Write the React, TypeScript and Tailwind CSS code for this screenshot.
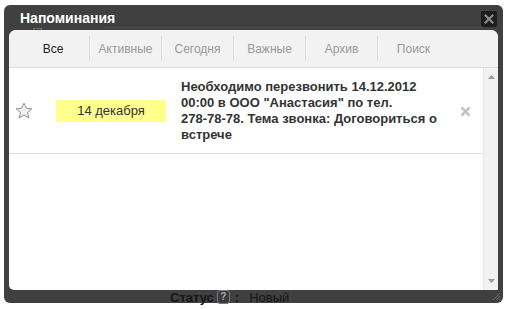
import React from "react";

const tabs = ["Все", "Активные", "Сегодня", "Важные", "Архив", "Поиск"];

function Star() {
  return (
    <svg width="18" height="18" viewBox="0 0 18 18">
      <defs>
        <linearGradient id="sg" x1="0" y1="0" x2="0" y2="1">
          <stop offset="0" stopColor="#ffffff" />
          <stop offset="1" stopColor="#e6e6e6" />
        </linearGradient>
      </defs>
      <polygon
        points="9,1.2 11.3,6.3 16.8,6.8 12.6,10.5 13.9,16 9,13.1 4.1,16 5.4,10.5 1.2,6.8 6.7,6.3"
        fill="url(#sg)"
        stroke="#8f8f8f"
        strokeWidth="1"
        strokeLinejoin="round"
      />
    </svg>
  );
}

export default function App() {
  return (
    <div
      className="relative w-[506px] h-[309px] bg-white overflow-hidden"
      style={{ fontFamily: '"Liberation Sans", Arial, sans-serif' }}
    >
      <div className="relative ml-[4px] mt-[5px] w-[499px] h-[298px] rounded-[6px] bg-[#404040] flex flex-col">
        {/* bleed-through of page content */}
        <div className="absolute left-[100px] right-[20px] top-[22px] h-px bg-[#4c4c4c]" />
        <div className="absolute left-[29px] top-[23px] w-[9px] h-[4px] border border-b-0 border-[#6a6a6a]" />

        {/* title bar */}
        <div className="relative h-[25px] flex items-center justify-between pl-[16px] pr-[6px]">
          <span className="text-[14px] font-bold text-white leading-none mt-[1px]">Напоминания</span>
          <div className="w-[16px] h-[16px] mt-[3px] rounded-[2px] bg-[#1c1c1c] flex items-center justify-center">
            <svg width="10" height="10" viewBox="0 0 10 10">
              <path d="M1.5 1.5 L8.5 8.5 M8.5 1.5 L1.5 8.5" stroke="#8a8a8a" strokeWidth="2.2" strokeLinecap="square" />
            </svg>
          </div>
        </div>

        {/* inner panel */}
        <div className="relative mx-[5px] h-[260px] bg-white rounded-t-[7px] rounded-bl-[5px] overflow-hidden flex flex-col">
          {/* tabs */}
          <div className="h-[38px] bg-[#f2f2f2] border-b border-[#dcdcdc] flex items-center pl-[8px]">
            {tabs.map((t, i) => (
              <div
                key={t}
                className={
                  "w-[72px] h-[25px] flex items-center justify-center text-[12px] " +
                  (i === 0 ? "text-[#222]" : "text-[#9a9a9a] border-l border-[#dedede]")
                }
              >
                {t}
              </div>
            ))}
          </div>

          {/* content */}
          <div className="flex-1 flex">
            <div className="flex-1">
              <div className="h-[86px] border-b border-[#dcdcdc] flex items-center">
                <div className="w-[30px] flex justify-center mt-[1px]">
                  <Star />
                </div>
                <div className="ml-[17px] w-[110px] h-[22px] bg-[#ffff8c] flex items-center justify-center text-[13px] text-[#333]">
                  14 декабря
                </div>
                <div className="ml-[15px] w-[272px] text-[13px] leading-[16px] font-bold text-[#333] whitespace-nowrap">
                  <div>Необходимо перезвонить 14.12.2012</div>
                  <div>00:00 в ООО "Анастасия" по тел.</div>
                  <div>278-78-78. Тема звонка: Договориться о</div>
                  <div>встрече</div>
                </div>
                <div className="ml-[7px] mt-[2px] flex items-center">
                  <svg width="11" height="11" viewBox="0 0 11 11">
                    <path d="M1.5 1.5 L9.5 9.5 M9.5 1.5 L1.5 9.5" stroke="#c4c4c4" strokeWidth="2.6" />
                  </svg>
                </div>
              </div>
            </div>
            {/* scrollbar */}
            <div className="w-[15px] bg-[#f1f1f1] border-l border-[#e6e6e6] flex flex-col items-center justify-between py-[7px]">
              <svg width="7" height="4" viewBox="0 0 7 4">
                <polygon points="0,4 7,4 3.5,0" fill="#9a9a9a" />
              </svg>
              <svg width="7" height="4" viewBox="0 0 7 4">
                <polygon points="0,0 7,0 3.5,4" fill="#9a9a9a" />
              </svg>
            </div>
          </div>
        </div>

        {/* status line */}
        <div className="relative h-[13px]">
          <div className="absolute left-[166px] top-[0px] flex items-center text-[13px] text-[#151515] leading-none">
            <span className="font-bold">Статус</span>
            <span className="ml-[3px] w-[13px] h-[14px] rounded-[3px] border border-[#7a7a7a] bg-[#3a3a3a] flex items-center justify-center text-[10px] font-bold text-[#aaa]">?</span>
            <span className="ml-[5px] font-bold">:</span>
            <span className="ml-[10px]">Новый</span>
          </div>
          {/* resize grip */}
          <svg className="absolute right-[3px] bottom-[3px]" width="8" height="8" viewBox="0 0 8 8">
            <path d="M8 1 L1 8 M8 4 L4 8 M8 7 L7 8" stroke="#6a6a6a" strokeWidth="1" />
          </svg>
        </div>
      </div>
    </div>
  );
}
